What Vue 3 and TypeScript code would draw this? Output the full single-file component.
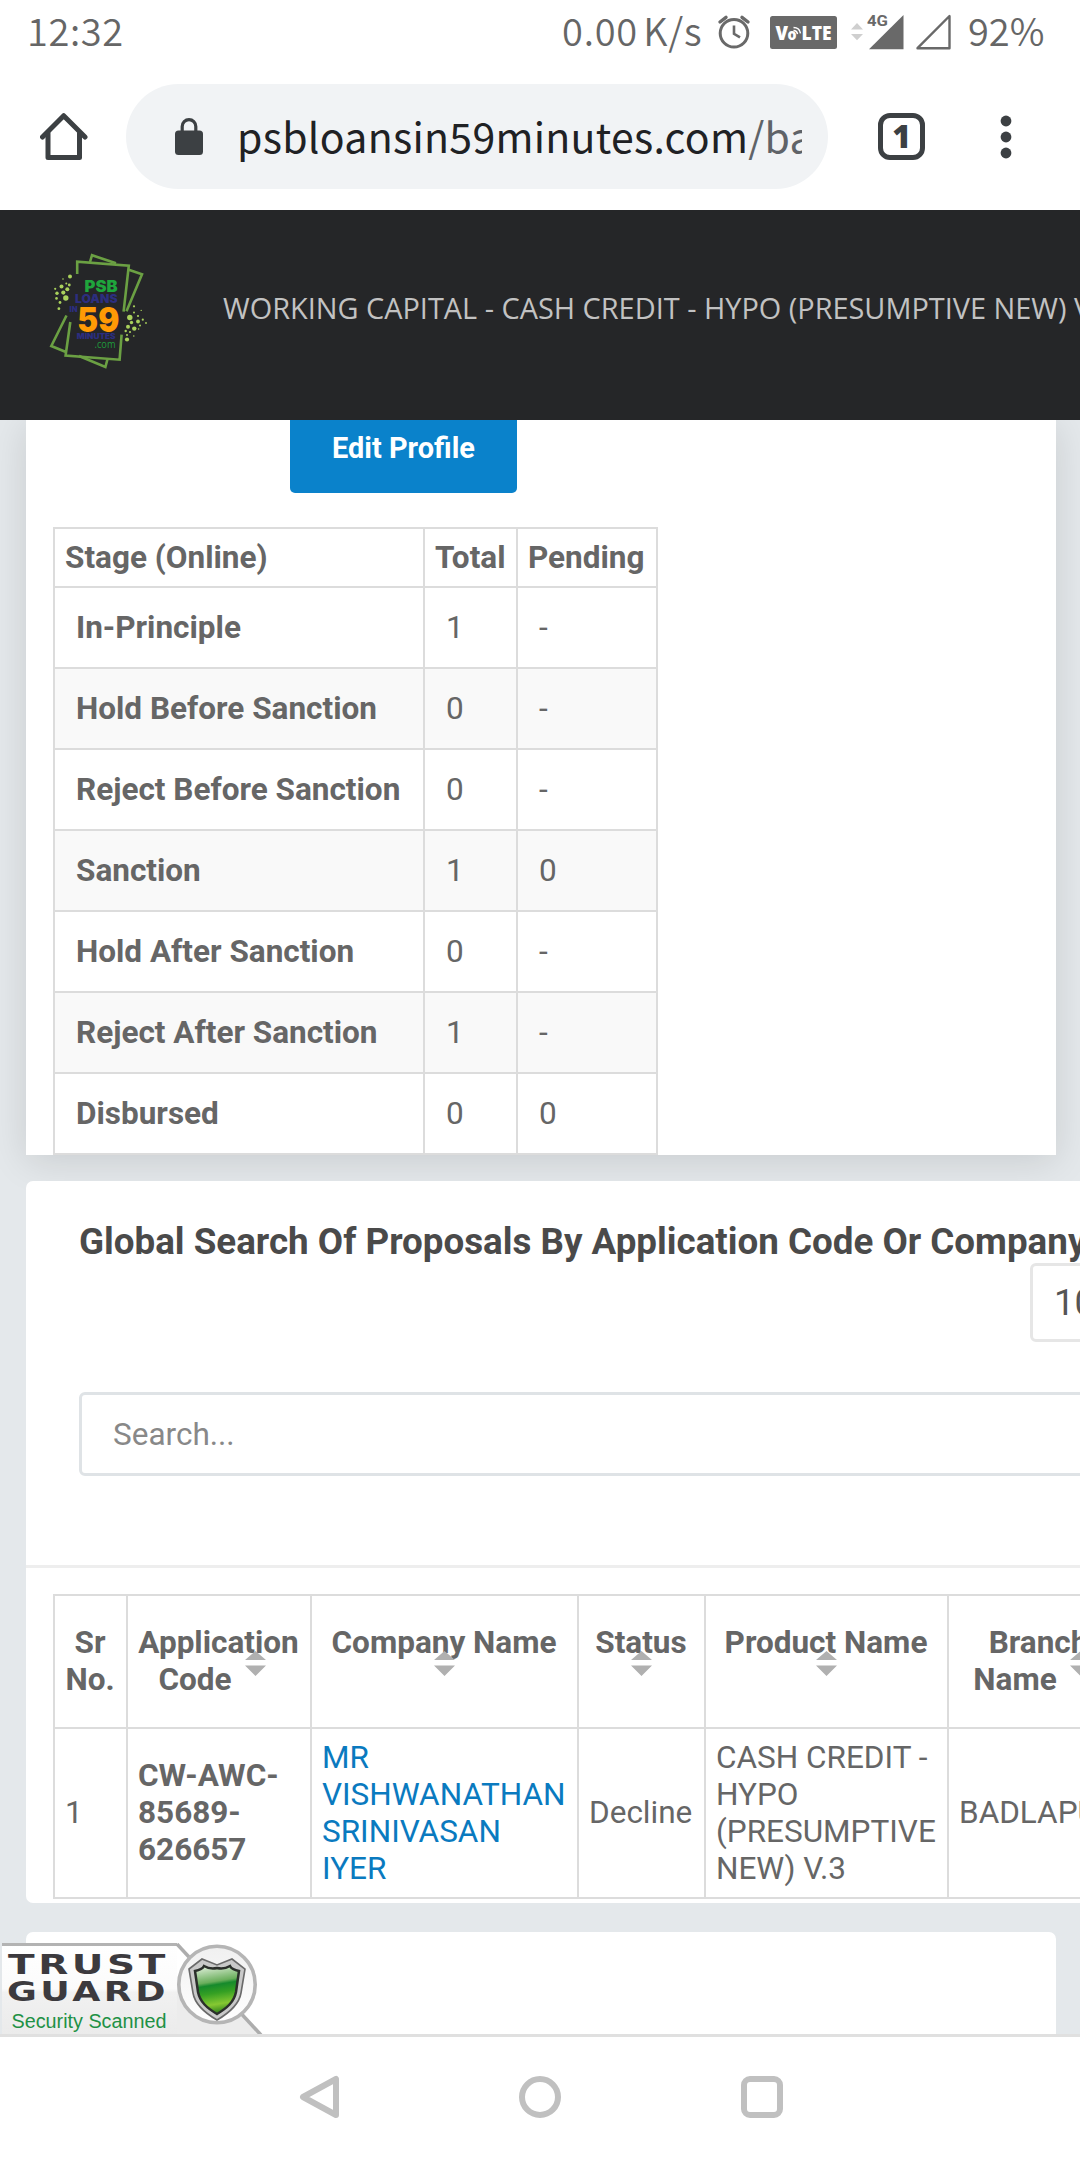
<script setup lang="ts">
interface Stage {
  name: string
  total: string
  pending: string
}

interface Column {
  key: string
  lines: string[]
  sortable: boolean
}

const stages: Stage[] = [
  { name: 'In-Principle', total: '1', pending: '-' },
  { name: 'Hold Before Sanction', total: '0', pending: '-' },
  { name: 'Reject Before Sanction', total: '0', pending: '-' },
  { name: 'Sanction', total: '1', pending: '0' },
  { name: 'Hold After Sanction', total: '0', pending: '-' },
  { name: 'Reject After Sanction', total: '1', pending: '-' },
  { name: 'Disbursed', total: '0', pending: '0' },
]

const columns: Column[] = [
  { key: 'sr', lines: ['Sr', 'No.'], sortable: false },
  { key: 'code', lines: ['Application', 'Code'], sortable: true },
  { key: 'company', lines: ['Company Name', ''], sortable: true },
  { key: 'status', lines: ['Status', ''], sortable: true },
  { key: 'product', lines: ['Product Name', ''], sortable: true },
  { key: 'branch', lines: ['Branch', 'Name'], sortable: true },
]

// x, y, radius of the confetti dots on both sides of the logo
const dots: number[][] = [
  [70, 276.5, 2], [63, 279, 0.8], [66.3, 283.5, 1], [69.3, 285, 1.4], [61.5, 286.5, 2], [55.2, 288.8, 1.1],
  [67.3, 289.3, 2], [57, 293.3, 1.7], [63.3, 292.6, 2.1], [56.5, 298.4, 1.3], [65.8, 298, 2.7], [60, 302.5, 1.4],
  [58.9, 308.7, 1.4], [134, 306.3, 1.1], [141.2, 310.4, 0.7], [134, 312.6, 1], [138, 316, 1.1], [129.8, 317.5, 2.7],
  [142.8, 319.7, 1.1], [138, 321.5, 1.9], [131.5, 322.5, 1.7], [146, 323, 0.9], [128, 326.7, 2], [140, 325.4, 1],
  [134.3, 328.6, 2.2], [138.6, 329, 0.8], [125.7, 331, 1.2], [130, 332, 1.1], [127, 335, 1], [133.8, 336, 0.8],
  [127, 339.5, 2.1],
]
</script>

<template>
  <div class="screen">
    <header class="status-bar">
      <span class="clock">12:32</span>
      <span class="speed">0.00 K/s</span>
      <svg class="alarm" width="34" height="36" viewBox="0 0 34 36" fill="none" stroke="#696969">
        <circle cx="17" cy="19.300" r="13.800" stroke-width="3" />
        <path d="M17 11.500v8.300l6 3.600" stroke-width="2.600" />
        <path d="M3 8l6-4.700M31 8l-6-4.700" stroke-width="3.400" stroke-linecap="round" />
      </svg>
      <svg class="volte" width="67" height="33" viewBox="0 0 67 33">
        <rect width="67" height="33" rx="2.500" fill="#696969" />
        <g fill="#fff" font-family="'Open Sans', sans-serif" font-weight="800">
          <text x="5.500" y="23.500" font-size="19" textLength="12.500" lengthAdjust="spacingAndGlyphs">V</text>
          <text x="17.500" y="23.500" font-size="15" textLength="9" lengthAdjust="spacingAndGlyphs">o</text>
          <text x="31.500" y="23.500" font-size="19" textLength="30" lengthAdjust="spacingAndGlyphs">LTE</text>
        </g>
        <path d="M23.500 14.500c2.200 0 3.600 1.300 4 3.600M23.500 11.400c4 0 6.500 2.300 7 6" fill="none" stroke="#fff" stroke-width="1.500" />
      </svg>
      <svg class="signal" width="104" height="38" viewBox="849 12 104 38">
        <path d="M851 28.500l6-6.500 6 6.500zM851 33l6 6.300 6-6.300z" fill="#cfcfcf" />
        <text x="867" y="25" font-size="15" font-weight="700" fill="#696969" font-family="Roboto, sans-serif" textLength="21" lengthAdjust="spacingAndGlyphs">4G</text>
        <path d="M903.500 14v34.200h-34.500z" fill="#696969" />
        <path d="M949.500 15v32.200h-32z" fill="none" stroke="#696969" stroke-width="2.400" stroke-linejoin="round" />
      </svg>
      <span class="battery">92%</span>
    </header>

    <nav class="toolbar">
      <svg class="home" width="48" height="48" viewBox="40 113 48 48" fill="none" stroke="#3c4043" stroke-width="5" stroke-linejoin="round" stroke-linecap="round">
        <path d="M42.500 137L63.700 115.700L85 137" />
        <path d="M48 133.500v24h31.500v-24" />
      </svg>
      <div class="address">
        <svg width="28" height="37" viewBox="0 0 28 37">
          <rect y="12.500" width="28" height="24.500" rx="3.500" fill="#3c4043" />
          <path d="M7.200 14V8.500a6.800 6.800 0 0 1 13.600 0V14" fill="none" stroke="#3c4043" stroke-width="3.200" />
        </svg>
        <div class="url">psbloansin59minutes.com<span class="path">/bank</span></div>
      </div>
      <div class="tabs">1</div>
      <svg class="menu" width="12" height="46" viewBox="0 0 12 46" fill="#3c4043">
        <circle cx="6" cy="7" r="5.400" /><circle cx="6" cy="23" r="5.400" /><circle cx="6" cy="39" r="5.400" />
      </svg>
    </nav>

    <div class="site-header">
      <svg class="logo" width="104" height="122" viewBox="48 250 104 122">
        <g fill="none" stroke="#6ba043" stroke-width="2.600">
          <path d="M90 262l2-6.800 24 8M128 269.500l14 4.800-15.500 37" />
          <path d="M66.500 315.500L51.300 346l14 5.700M79 356l26.400 11 2-7.500" />
          <path d="M77.200 274v-12.300l51.600 4-5.200 46M70.300 322l-4.700 33.500 54 4.200 2-25" />
        </g>
        <circle v-for="(d, i) in dots" :key="i" :cx="d[0]" :cy="d[1]" :r="d[2]" fill="#a9d15c" />
        <g font-family="Inter, 'Liberation Sans', sans-serif" font-weight="900">
          <text x="84.500" y="292.300" font-size="15.500" fill="#1fa53c" textLength="33" lengthAdjust="spacingAndGlyphs">PSB</text>
          <text x="75" y="303" font-size="11.800" fill="#2c2e7f" textLength="42.500" lengthAdjust="spacingAndGlyphs">LOANS</text>
          <text x="69.500" y="311.500" font-size="7" fill="#2c2e7f" textLength="8" lengthAdjust="spacingAndGlyphs">IN</text>
          <text x="77.300" y="331.500" font-size="33.500" fill="#ff9a05" textLength="42" lengthAdjust="spacingAndGlyphs">59</text>
          <text x="76.800" y="339.300" font-size="7.300" fill="#2c2e7f" textLength="38.800" lengthAdjust="spacingAndGlyphs">MINUTES</text>
        </g>
        <text x="94.500" y="347.700" font-size="11" fill="#1f9a3c" font-family="'Open Sans', sans-serif" textLength="21" lengthAdjust="spacingAndGlyphs">.com</text>
      </svg>
      <span class="product-title">WORKING CAPITAL - CASH CREDIT - HYPO (PRESUMPTIVE NEW) V.3</span>
    </div>

    <main class="page">
      <section class="card profile">
        <button class="edit">Edit Profile</button>
        <table class="stages">
          <colgroup><col class="s1" /><col class="s2" /><col class="s3" /></colgroup>
          <thead>
            <tr><th>Stage (Online)</th><th>Total</th><th>Pending</th></tr>
          </thead>
          <tbody>
            <tr v-for="s in stages" :key="s.name">
              <td class="strong">{{ s.name }}</td>
              <td>{{ s.total }}</td>
              <td>{{ s.pending }}</td>
            </tr>
          </tbody>
        </table>
      </section>

      <section class="card search">
        <div class="search-head">
          <h2>Global Search Of Proposals By Application Code Or Company Name</h2>
          <div class="page-size">10</div>
          <div class="search-box">Search...</div>
        </div>
        <table class="proposals">
          <colgroup><col v-for="c in columns" :key="c.key" :class="c.key" /></colgroup>
          <thead>
            <tr>
              <th v-for="c in columns" :key="c.key">
                {{ c.lines[0] }}<br />{{ c.lines[1] }}<span v-if="c.sortable" class="sort"><svg width="21" height="25" viewBox="0 0 21 25" fill="#b0b0b0"><path d="M0 9L10.500 0L21 9zM0 14.500h21L10.500 25z" /></svg></span>
              </th>
            </tr>
          </thead>
          <tbody>
            <tr>
              <td>1</td>
              <td class="strong">CW-AWC-<br />85689-<br />626657</td>
              <td class="link">MR<br />VISHWANATHAN<br />SRINIVASAN<br />IYER</td>
              <td>Decline</td>
              <td>CASH CREDIT -<br />HYPO<br />(PRESUMPTIVE<br />NEW) V.3</td>
              <td>BADLAPUR</td>
            </tr>
          </tbody>
        </table>
      </section>

      <section class="card next"></section>

      <svg class="trust" width="264" height="92" viewBox="0 1943 264 92">
        <defs>
          <linearGradient id="plate" x1="0" y1="0" x2="0" y2="1">
            <stop offset="0" stop-color="#fff" /><stop offset=".5" stop-color="#fbfbfb" />
            <stop offset=".54" stop-color="#f1f1f1" /><stop offset="1" stop-color="#ebebeb" />
          </linearGradient>
          <linearGradient id="shield" x1="0" y1="0" x2="0.150" y2="1">
            <stop offset="0" stop-color="#eaf5e6" /><stop offset=".38" stop-color="#6aae5c" />
            <stop offset=".45" stop-color="#168a2c" /><stop offset=".62" stop-color="#35a023" />
            <stop offset=".85" stop-color="#86c832" /><stop offset="1" stop-color="#3f8f20" />
          </linearGradient>
          <linearGradient id="lens" x1="0" y1="0" x2="0" y2="1">
            <stop offset="0" stop-color="#f0f0f0" /><stop offset="1" stop-color="#fff" />
          </linearGradient>
        </defs>
        <path d="M2 1943h175v91.500H2z" fill="url(#plate)" />
        <path d="M177 1984h38l47 51h-85z" fill="#ececec" />
        <path d="M2 1944.500h175" stroke="#b3b3b3" stroke-width="3" />
        <path d="M177 1944l84 91" stroke="#adadad" stroke-width="3.500" />
        <circle cx="217" cy="1984.500" r="38.200" fill="url(#lens)" stroke="#b5b5b5" stroke-width="3.600" />
        <path d="M189 1969l13-10 15 6 15-6 13 10-4 24c-2 12-12 20-24 27-12-7-22-15-24-27z" fill="#c9c9c9" stroke="#6a6a6a" stroke-width="1.600" />
        <path d="M195 1971c5-1 8-3 9-5 5 3 9 3 13 2 4 1 8 1 13-2 1 2 4 4 9 5l-3 21c-2 10-9 16-19 22-10-6-17-12-19-22z" fill="url(#shield)" stroke="#2b2f2b" stroke-width="2.500" />
        <g class="wordmark">
          <text x="8" y="1974.300" font-size="27" textLength="161" lengthAdjust="spacingAndGlyphs">TRUST</text>
          <text x="7" y="2001.300" font-size="26" textLength="162" lengthAdjust="spacingAndGlyphs">GUARD</text>
        </g>
        <text x="11.500" y="2027.500" font-size="19.500" font-family="'Liberation Sans', sans-serif" fill="#1e9145" textLength="155" lengthAdjust="spacingAndGlyphs">Security Scanned</text>
      </svg>
    </main>

    <footer class="nav-bar">
      <svg width="42" height="44" viewBox="0 0 42 44"><path d="M6 22L39 4v36z" /></svg>
      <svg width="42" height="44" viewBox="0 0 42 44"><circle cx="21" cy="22" r="18" /></svg>
      <svg width="42" height="44" viewBox="0 0 42 44"><rect x="3" y="4" width="36" height="36" rx="6" /></svg>
    </footer>
  </div>
</template>

<style>
body {
  margin: 0;
  background: #fff;
}
</style>

<style scoped>
.screen {
  width: 1080px;
  height: 2160px;
  overflow: hidden;
  display: flex;
  flex-direction: column;
  background: #fff;
  font-family: Roboto, sans-serif;
  color: #666;
}

.status-bar {
  height: 66px;
  box-sizing: border-box;
  padding: 0 38px 2px 27px;
  display: flex;
  align-items: center;
  flex: none;
  font: 350 38px/50px 'Noto Sans CJK SC', 'Noto Sans', sans-serif;
  color: #666;
  white-space: nowrap;
}
.clock, .speed, .battery { padding-bottom: 4px; }
.clock { flex: 1; letter-spacing: 0.6px; }
.speed { width: 139px; margin-right: 16px; letter-spacing: 0.8px; word-spacing: -4px; }
.alarm { margin-right: 19px; }
.volte { margin-right: 12px; }
.signal { margin-right: 15px; }
.battery { width: 74px; }

.toolbar {
  height: 144px;
  box-sizing: border-box;
  padding: 0 67px 3px 40px;
  display: flex;
  align-items: center;
  flex: none;
}
.address {
  width: 702px;
  height: 105px;
  margin-left: 38px;
  box-sizing: border-box;
  padding: 0 26px 0 49px;
  border-radius: 53px;
  background: #f1f3f5;
  display: flex;
  align-items: center;
}
.url {
  flex: 1;
  margin-left: 34px;
  padding-bottom: 3px;
  overflow: hidden;
  white-space: nowrap;
  font: 400 41px/60px 'Noto Sans CJK SC', 'Noto Sans', sans-serif;
  letter-spacing: 0.3px;
  color: #202124;
}
.path { color: #5f6368; }
.tabs {
  width: 47px;
  height: 47px;
  box-sizing: border-box;
  margin-left: 50px;
  border: 5px solid #3c4043;
  border-radius: 12px;
  text-align: center;
  font: 800 32px/36px 'Open Sans', 'Noto Sans', sans-serif;
  color: #3c4043;
}
.menu { margin-left: 75px; }

.site-header {
  height: 210px;
  flex: none;
  display: flex;
  align-items: center;
  background: #252628;
  padding-left: 48px;
  overflow: hidden;
}
.logo { flex: none; margin-bottom: 8px; }
.product-title {
  margin-left: 71px;
  margin-bottom: 15px;
  white-space: nowrap;
  font: 400 28.900px/40px 'Open Sans', 'Noto Sans', sans-serif;
  color: #c2c2c2;
}

.page {
  position: relative;
  height: 1614px;
  flex: none;
  overflow: hidden;
  background: #e4e8eb;
}
.card {
  background: #fff;
  margin-left: 26px;
  box-sizing: border-box;
}
.profile {
  width: 1030px;
  height: 735px;
  box-shadow: 0 6px 36px rgba(0, 0, 0, 0.12);
}
.edit {
  display: block;
  margin: 0 0 34px 264px;
  width: 227px;
  height: 73px;
  padding: 0 0 17px;
  border: 0;
  border-radius: 0 0 5px 5px;
  background: #0a82cb;
  color: #fff;
  font: 700 28.900px/40px Roboto, sans-serif;
}

table {
  border-collapse: collapse;
  table-layout: fixed;
  font-size: 31.500px;
  line-height: 37px;
}
th, td {
  border: 2px solid #dcdcdc;
  padding: 0 8px 0 10px;
  text-align: left;
  white-space: nowrap;
}
th, .strong { font-weight: 700; }
.stages { width: 605px; margin-left: 27px; }
.stages thead tr { height: 59px; }
.stages tbody tr { height: 81px; }
.stages td { padding-left: 21px; }
.stages tbody tr:nth-child(even) { background: #f9f9f9; }
.s1 { width: 370px; }
.s2 { width: 93px; }
.s3 { width: 140px; }

.search {
  position: relative;
  width: 1200px;
  height: 722px;
  margin-top: 26px;
  border-radius: 7px;
}
.search-head {
  height: 387px;
  box-sizing: border-box;
  padding: 41px 0 0 53px;
  border-bottom: 3px solid #eee;
}
h2 {
  margin: 0;
  height: 41px;
  font: 700 36.750px/40px Roboto, sans-serif;
  color: #4a4a4a;
  white-space: nowrap;
}
.page-size {
  width: 140px;
  height: 79px;
  box-sizing: border-box;
  margin-left: 951px;
  border: 3px solid #e6e6e6;
  border-radius: 6px;
  padding-left: 21px;
  font-size: 36.500px;
  line-height: 74px;
  color: #555;
}
.search-box {
  height: 84px;
  box-sizing: border-box;
  margin-top: 50px;
  padding-left: 31px;
  border: 3px solid #dfe3e6;
  border-radius: 6px;
  font-size: 31.500px;
  line-height: 79px;
  color: #888;
}

.proposals { width: 1078px; margin: 26px 0 0 27px; }
.proposals thead tr { height: 133px; }
.proposals tbody tr { height: 170px; }
.proposals th { text-align: center; padding: 0 1px 2px 0; }
.proposals td { padding-bottom: 1px; }
.sr { width: 73px; }
.code { width: 184px; }
.company { width: 267px; }
.status { width: 127px; }
.product { width: 243px; }
.branch { width: 182px; }
.link { color: #0a7abf; }
.sort {
  position: relative;
  display: inline-block;
  width: 47px;
  height: 1px;
}
.sort svg { position: absolute; left: 13px; top: -38px; }

.next {
  width: 1030px;
  height: 140px;
  margin-top: 29px;
  border-radius: 7px;
}
.trust { position: absolute; left: 0; bottom: -1px; }
.wordmark {
  font-family: 'DejaVu Sans', sans-serif;
  font-weight: 700;
  fill: #3c3a3e;
  letter-spacing: 2.500px;
}

.nav-bar {
  flex: 1;
  box-sizing: border-box;
  border-top: 3px solid #e0e0e0;
  padding: 0 297px 3px 297px;
  display: flex;
  justify-content: space-between;
  align-items: center;
}
.nav-bar svg {
  fill: none;
  stroke: #c0c0c0;
  stroke-width: 6;
  stroke-linejoin: round;
}
</style>
